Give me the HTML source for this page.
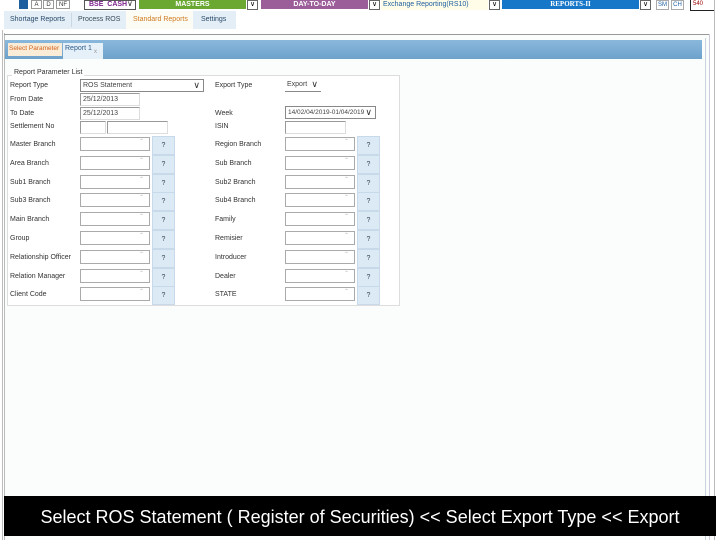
<!DOCTYPE html>
<html><head><meta charset="utf-8"><style>
*{margin:0;padding:0;box-sizing:border-box}
body{width:720px;height:540px;background:#fff;font-family:"Liberation Sans",sans-serif;position:relative;overflow:hidden}
.a{position:absolute}
.t{font-size:7px;color:#333;white-space:nowrap}
.inp{position:absolute;height:13px;border:1px solid #999;border-right-color:#ddd;border-bottom-color:#ddd;background:#fff;font-size:7px;color:#444;padding-left:2px;line-height:11px}
.spin{position:absolute;width:70px;height:14px;border:1px solid #aaa;background:#fff}
.spin:after{content:"⌃";position:absolute;right:5px;top:0;font-size:6px;color:#bbb}
.q{position:absolute;width:23px;height:19px;background:#dceaf6;border:1px solid #c8d9ea;font-size:7px;color:#345;text-align:center;line-height:17px}
.sel:after{content:"∨";position:absolute;right:3px;top:0;font-size:9px;color:#333}
</style></head><body>
<!-- top bar -->
<div class="a" style="left:19px;top:0;width:9px;height:9px;background:#1e5fa0"></div>
<div class="a t" style="left:31px;top:0;width:11px;height:9px;border:1px solid #999;font-size:6px;text-align:center;line-height:8px">A</div>
<div class="a t" style="left:43px;top:0;width:11px;height:9px;border:1px solid #999;font-size:6px;text-align:center;line-height:8px">D</div>
<div class="a t" style="left:56px;top:0;width:14px;height:9px;border:1px solid #999;font-size:6px;text-align:center;line-height:8px">NF</div>
<div class="a" style="left:84px;top:0;width:52px;height:10px;border:1px solid #555;font-size:7px;font-weight:bold;color:#7a1f8a;padding-left:4px;line-height:8px">BSE &nbsp;CASH</div>
<div class="a t" style="left:127px;top:-1px;font-size:8px">∨</div>
<div class="a" style="left:139px;top:0;width:107px;height:9px;background:#6aa832;color:#fff;font-size:7px;font-weight:bold;text-align:center;line-height:9px">MASTERS</div>
<div class="a" style="left:247px;top:0;width:11px;height:10px;border:1px solid #666;font-size:7px;text-align:center;line-height:8px">∨</div>
<div class="a" style="left:261px;top:0;width:107px;height:9px;background:#9b5e98;color:#fff;font-size:7px;font-weight:bold;text-align:center;line-height:9px">DAY-TO-DAY</div>
<div class="a" style="left:369px;top:0;width:11px;height:10px;border:1px solid #666;font-size:7px;text-align:center;line-height:8px">∨</div>
<div class="a" style="left:381px;top:0;width:107px;height:10px;background:#fffde8;color:#1e5fa0;font-size:7px;line-height:9px;padding-left:2px">Exchange Reporting(RS10)</div>
<div class="a" style="left:489px;top:0;width:11px;height:10px;border:1px solid #666;font-size:7px;text-align:center;line-height:8px">∨</div>
<div class="a" style="left:502px;top:0;width:137px;height:9px;background:#1677c8;color:#fff;font-size:7px;font-weight:bold;text-align:center;line-height:9px;font-family:'Liberation Serif',serif">REPORTS-II</div>
<div class="a" style="left:640px;top:0;width:11px;height:10px;border:1px solid #666;font-size:7px;text-align:center;line-height:8px">∨</div>
<div class="a" style="left:656px;top:0;width:13px;height:10px;border:1px solid #aaa;font-size:6px;color:#1e5fa0;text-align:center;line-height:8px">SM</div>
<div class="a" style="left:671px;top:0;width:13px;height:10px;border:1px solid #aaa;font-size:6px;color:#1e5fa0;text-align:center;line-height:8px">CH</div>
<div class="a" style="left:690px;top:0;width:25px;height:11px;border:1px solid #222;border-top:none;font-size:6px;color:#900;padding-left:2px;line-height:9px">540</div>
<!-- menu tabs -->
<div class="a" style="left:4px;top:11px;width:232px;height:18px;background:#e3eef6"></div>
<div class="a t" style="left:10px;top:16px;color:#2a4a6a">Shortage Reports</div>
<div class="a" style="left:71px;top:13px;width:1px;height:14px;background:#c8d8e4"></div>
<div class="a t" style="left:78px;top:16px;color:#3a4a5a">Process ROS</div>
<div class="a" style="left:126px;top:11px;width:67px;height:18px;background:#fcfcf4"></div>
<div class="a t" style="left:133px;top:16px;color:#d07a20">Standard Reports</div>
<div class="a t" style="left:201px;top:16px;color:#2a4a6a">Settings</div>
<!-- outer frame -->
<div class="a" style="left:2px;top:30px;width:1px;height:510px;background:#bbb"></div>
<div class="a" style="left:4px;top:33px;width:1px;height:507px;background:#bbb"></div>
<div class="a" style="left:714px;top:0;width:1px;height:540px;background:#bbb"></div>
<div class="a" style="left:4px;top:34px;width:706px;height:1px;background:#999"></div>
<div class="a" style="left:709px;top:34px;width:1px;height:506px;background:#ccd"></div>
<div class="a" style="left:5px;top:35px;width:704px;height:505px;background:#fbfdfd"></div>
<div class="a" style="left:705px;top:38px;width:1px;height:502px;background:#c8d4dc"></div>
<!-- blue header -->
<div class="a" style="left:5px;top:40px;width:697px;height:19px;background:linear-gradient(#8ab8dc,#6ea2cc)"></div>
<div class="a" style="left:8px;top:43px;width:54px;height:13px;background:#fbecd8;font-size:6.5px;color:#d0641c;line-height:11px;padding-left:1px">Select Parameter</div>
<div class="a" style="left:63px;top:43px;width:40px;height:16px;background:#e6f0f8;font-size:7px;color:#2a5a8a;padding-left:2px;line-height:11px">Report 1</div>
<div class="a" style="left:94px;top:49px;font-size:6px;color:#999">x</div>
<!-- form box -->
<div class="a" style="left:7px;top:75px;width:393px;height:231px;border:1px solid #ddd;background:#fff"></div>
<div class="a t" style="left:12px;top:69px;background:#fff;padding:0 2px">Report Parameter List</div>
<div class="a t" style="left:10px;top:82px">Report Type</div>
<div class="inp sel" style="left:80px;top:79px;width:124px;border-color:#888">ROS Statement</div>
<div class="a t" style="left:215px;top:82px">Export Type</div>
<div class="inp sel" style="left:285px;top:79px;width:36px;border:none;border-bottom:1px solid #888">Export</div>
<div class="a t" style="left:10px;top:96px">From Date</div>
<div class="inp" style="left:80px;top:93px;width:60px">25/12/2013</div>
<div class="a t" style="left:10px;top:110px">To Date</div>
<div class="inp" style="left:80px;top:107px;width:60px">25/12/2013</div>
<div class="a t" style="left:215px;top:110px">Week</div>
<div class="inp sel" style="left:285px;top:106px;width:91px;border-color:#888;font-size:6.5px">14/02/04/2019-01/04/2019</div>
<div class="a t" style="left:10px;top:123px">Settlement No</div>
<div class="inp" style="left:80px;top:121px;width:26px"></div>
<div class="inp" style="left:107px;top:121px;width:61px"></div>
<div class="a t" style="left:215px;top:123px">ISIN</div>
<div class="inp" style="left:285px;top:121px;width:61px"></div>
<div id="rows"></div>
<!-- caption bar -->
<div class="a" style="left:4px;top:496px;width:712px;height:40px;background:#000;color:#fff;font-size:18px;text-align:center;line-height:42px;white-space:nowrap">Select ROS Statement ( Register of Securities) &lt;&lt; Select Export Type &lt;&lt; Export</div>
<script>
var L=["Master Branch","Area Branch","Sub1 Branch","Sub3 Branch","Main Branch","Group","Relationship Officer","Relation Manager","Client Code"];
var R=["Region Branch","Sub Branch","Sub2 Branch","Sub4 Branch","Family","Remisier","Introducer","Dealer","STATE"];
var h="";
for(var i=0;i<9;i++){var y=136+i*18.8;
h+='<div class="a t" style="left:10px;top:'+(y+5)+'px">'+L[i]+'</div><div class="spin" style="left:80px;top:'+(y+1)+'px"></div><div class="q" style="left:152px;top:'+y+'px">?</div>';
h+='<div class="a t" style="left:215px;top:'+(y+5)+'px">'+R[i]+'</div><div class="spin" style="left:285px;top:'+(y+1)+'px"></div><div class="q" style="left:357px;top:'+y+'px">?</div>';}
document.getElementById("rows").innerHTML=h;
</script>
</body></html>
